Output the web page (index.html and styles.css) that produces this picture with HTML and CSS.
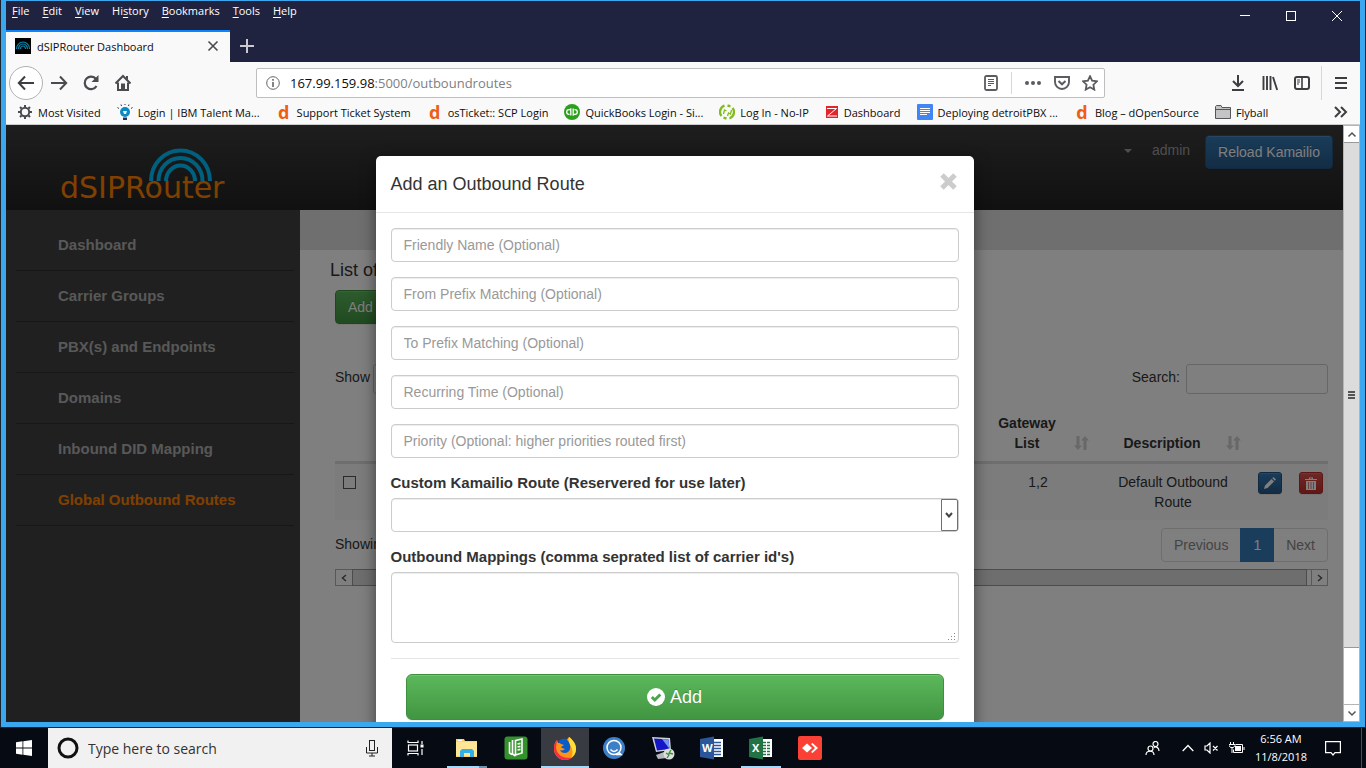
FILE: index.html
```html
<!DOCTYPE html>
<html lang="en">
<head>
<meta charset="utf-8">
<title>dSIPRouter Dashboard</title>
<link rel="stylesheet" href="styles.css">
</head>
<body>
<div class="window">
  <header class="titlebar">
    <nav class="menubar">
      <a href="#"><u>F</u>ile</a><a href="#"><u>E</u>dit</a><a href="#"><u>V</u>iew</a><a href="#">Hi<u>s</u>tory</a><a href="#"><u>B</u>ookmarks</a><a href="#"><u>T</u>ools</a><a href="#"><u>H</u>elp</a>
    </nav>
    <div class="window-controls">
      <button aria-label="Minimize"><svg width="12" height="12" viewBox="0 0 12 12"><path d="M1 5.500h10" stroke="#fff"/></svg></button>
      <button aria-label="Maximize"><svg width="12" height="12" viewBox="0 0 12 12"><rect x="1.500" y="1.500" width="9" height="9" fill="none" stroke="#fff"/></svg></button>
      <button aria-label="Close"><svg width="12" height="12" viewBox="0 0 12 12"><path d="M1 1l10 10M11 1L1 11" stroke="#fff"/></svg></button>
    </div>
    <div class="tabs">
      <div class="tab">
        <svg width="16" height="16" viewBox="0 0 16 16"><rect width="16" height="16" fill="#000"/><g fill="none" stroke="#0b86ad" stroke-width="1.200"><path d="M1.500 11a6.500 7 0 0 1 13 0"/><path d="M3.500 11a4.500 5 0 0 1 9 0"/><path d="M5.500 11a2.500 3 0 0 1 5 0"/></g></svg>
        <span class="tab-title">dSIPRouter Dashboard</span>
        <button aria-label="Close tab"><svg width="12" height="12" viewBox="0 0 12 12"><path d="M1.500 1.500l9 9M10.500 1.500l-9 9" stroke="#4a4a4f" stroke-width="1.600"/></svg></button>
      </div>
      <button class="new-tab" aria-label="New tab"><svg width="14" height="14" viewBox="0 0 14 14"><path d="M0 7h14M7 0v14" stroke="#c9c9cf" stroke-width="2"/></svg></button>
    </div>
  </header>

  <div class="toolbar">
    <div class="nav-buttons">
      <button class="back" aria-label="Back"><svg width="18" height="18" viewBox="0 0 18 18"><path d="M17 9H2M8 2.500L1.800 9 8 15.500" fill="none" stroke="#3d3d42" stroke-width="2"/></svg></button>
      <button aria-label="Forward"><svg width="18" height="18" viewBox="0 0 18 18"><path d="M1 9h15M10 2.500L16.200 9 10 15.500" fill="none" stroke="#4a4a4f" stroke-width="2"/></svg></button>
      <button aria-label="Reload"><svg width="18" height="18" viewBox="0 0 18 18"><path d="M14.500 12A6.300 6.300 0 1 1 14 5" fill="none" stroke="#4a4a4f" stroke-width="2.200"/><path d="M16.500 1v7h-7z" fill="#4a4a4f"/></svg></button>
      <button aria-label="Home"><svg width="18" height="18" viewBox="0 0 18 18"><path d="M1.500 9.500L9 2l7.500 7.500" fill="none" stroke="#4a4a4f" stroke-width="2"/><path d="M4 8.500v7.500h10V8.500" fill="none" stroke="#4a4a4f" stroke-width="2"/><path d="M7 16V9.500h4V16z" fill="#4a4a4f"/><path d="M12 2h2v4l-2-2z" fill="#4a4a4f"/></svg></button>
    </div>
    <label class="urlbar">
      <svg width="14" height="14" viewBox="0 0 14 14"><circle cx="7" cy="7" r="6.300" fill="none" stroke="#666"/><path d="M7 6v5M7 3v1.800" stroke="#666" stroke-width="1.600"/></svg>
      <span class="url" role="textbox" aria-label="Address">167.99.159.98<span class="url-path">:5000/outboundroutes</span></span>
      <svg width="16" height="16" viewBox="0 0 16 16"><rect x="2" y="1" width="12" height="14" rx="1.500" fill="none" stroke="#5b5b60" stroke-width="1.800"/><path d="M5 4.500h6M5 6.500h6M5 8.500h6M5 10.500h3" stroke="#5b5b60"/></svg>
      <i class="url-sep"></i>
      <svg width="18" height="16" viewBox="0 0 18 16"><g fill="#5b5b60"><circle cx="3" cy="8" r="2"/><circle cx="9" cy="8" r="2"/><circle cx="15" cy="8" r="2"/></g></svg>
      <svg width="16" height="16" viewBox="0 0 16 16"><path d="M1 2h14v5a7 7 0 0 1-14 0z" fill="none" stroke="#5b5b60" stroke-width="1.900"/><path d="M4.500 6L8 9.300 11.500 6" fill="none" stroke="#5b5b60" stroke-width="2"/></svg>
      <svg width="16" height="16" viewBox="0 0 16 16"><path d="M8 1.200l2.100 4.500 4.900.6-3.600 3.400.9 4.900L8 12.200l-4.300 2.400.9-4.900L1 6.300l4.900-.6z" fill="none" stroke="#5b5b60" stroke-width="1.800"/></svg>
    </label>
    <div class="tool-buttons">
      <button aria-label="Downloads"><svg width="16" height="16" viewBox="0 0 16 16"><path d="M8 0v10M3 6l5 5 5-5M2 15h12" fill="none" stroke="#3d3d42" stroke-width="2"/></svg></button>
      <button aria-label="Library"><svg width="16" height="16" viewBox="0 0 16 16"><path d="M1.500 1v14M5 1v14M8.500 1v14M11 2l4.200 13" fill="none" stroke="#3d3d42" stroke-width="1.900"/></svg></button>
      <button aria-label="Sidebars"><svg width="16" height="16" viewBox="0 0 16 16"><rect x="1" y="2" width="14" height="12" rx="2" fill="none" stroke="#3d3d42" stroke-width="2"/><path d="M8 2v12" stroke="#3d3d42" stroke-width="1.600"/><path d="M3 5h3M3 7h3M3 9h2" stroke="#3d3d42"/></svg></button>
    </div>
    <button class="app-menu" aria-label="Menu"><svg width="14" height="14" viewBox="0 0 14 14"><path d="M1 2h12M1 7h12M1 12h12" stroke="#3d3d42" stroke-width="2"/></svg></button>
  </div>

  <nav class="bookmarks">
    <a href="#"><svg width="16" height="16" viewBox="0 0 16 16"><circle cx="8" cy="8" r="4.200" fill="none" stroke="#4a4a4f" stroke-width="2"/><path d="M8 1v2M8 13v2M1 8h2M13 8h2M3 3l1.500 1.500M11.500 11.500L13 13M3 13l1.500-1.500M11.500 4.500L13 3" stroke="#4a4a4f" stroke-width="2"/></svg>Most Visited</a>
    <a href="#"><svg width="16" height="16" viewBox="0 0 16 16"><circle cx="8" cy="8" r="5" fill="#0d8ac4"/><path d="M6 7h4l-1 3H7z" fill="#e8f6fc"/><path d="M6 13.500h4V16H6z" fill="#24344f"/><path d="M4.500 2L4 .5M11.500 2l.5-1.500M2 4.500L.5 3.500M14 4.500l1.500-1M8 1V0" stroke="#24344f"/></svg>Login | IBM Talent Ma...</a>
    <a href="#"><b class="letter-d">d</b>Support Ticket System</a>
    <a href="#"><b class="letter-d">d</b>osTicket:: SCP Login</a>
    <a href="#"><svg width="16" height="16" viewBox="0 0 16 16"><circle cx="8" cy="8" r="8" fill="#2ca01c"/><g fill="none" stroke="#fff" stroke-width="1.300"><path d="M6.800 4.200v7.300M6.800 5.700H5a2.300 2.300 0 0 0 0 4.600h.6M9.200 11.800V4.500M9.200 10.300H11a2.300 2.300 0 0 0 0-4.600h-.6"/></g></svg>QuickBooks Login - Si...</a>
    <a href="#"><svg width="16" height="16" viewBox="0 0 16 16"><path d="M2.500 12a6.500 6.500 0 0 1 3-10.300M8.500 1.500l3 .8M13.500 4a6.500 6.500 0 0 1-3 10.300M7.500 14.500l-3-.8" fill="none" stroke="#82bc1f" stroke-width="2.400"/><path d="M4.500 10l1-4 2 1M8.500 12l1-3 2 1 1-4" fill="none" stroke="#82bc1f" stroke-width="1.300"/></svg>Log In - No-IP</a>
    <a href="#"><svg width="14" height="16" viewBox="0 0 14 16"><rect x="1" y="2" width="12" height="12" fill="#e2242c"/><path d="M2 4.500h9.500L2.500 12H12" fill="none" stroke="#fff"/></svg>Dashboard</a>
    <a href="#"><svg width="16" height="16" viewBox="0 0 16 16"><rect width="16" height="16" rx="1" fill="#4285f4"/><path d="M3 4.500h10M3 6.500h10M3 8.500h10M3 10.500h7" stroke="#fff"/></svg>Deploying detroitPBX ...</a>
    <a href="#"><b class="letter-d">d</b>Blog – dOpenSource</a>
    <a href="#"><svg width="16" height="16" viewBox="0 0 16 16"><path d="M.5 14.500v-12l1-1h4.500l1 2h8.500v11z" fill="#c4c4c4" stroke="#55555a"/><path d="M1 5.500h14" stroke="#55555a"/></svg>Flyball</a>
    <button class="overflow" aria-label="More bookmarks"><svg width="14" height="12" viewBox="0 0 14 12"><path d="M1 1l5 5-5 5M7 1l5 5-5 5" fill="none" stroke="#3d3d42" stroke-width="2"/></svg></button>
  </nav>

  <div class="viewport">
    <div class="page">
      <header class="site-header">
        <svg class="logo" width="172" height="56" viewBox="0 0 172 56" role="img" aria-label="dSIPRouter">
          <g fill="none" stroke="#00c0ff" stroke-width="4"><path d="M91 34a29.500 30.500 0 0 1 59 0"/><path d="M98.500 34a22 23 0 0 1 44 0"/><path d="M106 34a14.500 15.500 0 0 1 29 0"/></g>
          <text class="logo-text" x="0" y="51">dSIPRouter</text>
        </svg>
        <div class="account">
          <i class="caret"></i>
          <a href="#">admin</a>
          <button class="btn btn-primary">Reload Kamailio</button>
        </div>
      </header>
      <div class="columns">
        <nav class="sidebar">
          <a href="#">Dashboard</a>
          <a href="#">Carrier Groups</a>
          <a href="#">PBX(s) and Endpoints</a>
          <a href="#">Domains</a>
          <a href="#">Inbound DID Mapping</a>
          <a href="#" class="current">Global Outbound Routes</a>
        </nav>
        <main class="content">
          <div class="strip"></div>
          <h4 class="heading">List of Outbound Routes</h4>
          <div class="panel">
            <button class="btn btn-success">Add</button>
            <div class="filters">
              <label>Show <select class="small-control"><option>10</option></select></label>
              <label>Search: <input class="small-control search" type="search"></label>
            </div>
            <table class="routes">
              <colgroup><col class="col-check"><col><col class="col-gateway"><col class="col-desc"><col class="col-edit"><col class="col-delete"></colgroup>
              <thead><tr>
                <th></th><th></th>
                <th class="sortable">Gateway List<svg class="sort" width="15" height="14" viewBox="0 0 15 14"><path d="M2.500 0h3v9.500H8L4 14 0 9.500h2.500zM9.500 14h3V4.500H15L11 0 7 4.500h2.500z"/></svg></th>
                <th class="sortable">Description<svg class="sort" width="15" height="14" viewBox="0 0 15 14"><path d="M2.500 0h3v9.500H8L4 14 0 9.500h2.500zM9.500 14h3V4.500H15L11 0 7 4.500h2.500z"/></svg></th>
                <th></th><th></th>
              </tr></thead>
              <tbody><tr>
                <td class="check-cell"><input type="checkbox" aria-label="Select route"></td><td></td>
                <td>1,2</td><td>Default Outbound Route</td>
                <td><button class="btn btn-primary btn-xs" aria-label="Edit"><svg width="12" height="12" viewBox="0 0 12 12"><path d="M0 12l1-3.500L7.500 2 10 4.500 3.500 11zM8.300 1.200L9.500 0 12 2.500l-1.200 1.200z" fill="#fff"/></svg></button></td>
                <td class="delete-cell"><button class="btn btn-danger btn-xs" aria-label="Delete"><svg width="12" height="13" viewBox="0 0 12 13"><path d="M0 3V2h4V.5h4V2h4v1zM5 1.500V2h2v-.5zM1 4h10v9H1z" fill="#fff"/><path d="M3.500 5v7M6 5v7M8.500 5v7" stroke="#c12e2a" stroke-width=".6"/></svg></button></td>
              </tr></tbody>
            </table>
            <div class="table-foot">
              <span>Showing</span>
              <div class="pagination"><a href="#">Previous</a><a href="#" class="active">1</a><a href="#">Next</a></div>
            </div>
            <div class="hscroll">
              <i><svg width="6" height="8" viewBox="0 0 6 8"><path d="M5 1L1.500 4 5 7" fill="none" stroke="#555" stroke-width="1.500"/></svg></i><b></b>
              <i><svg width="6" height="8" viewBox="0 0 6 8"><path d="M1 1l3.500 3L1 7" fill="none" stroke="#555" stroke-width="1.500"/></svg></i>
            </div>
          </div>
        </main>
      </div>
      <div class="backdrop">
        <form class="modal" role="dialog" aria-labelledby="modal-title">
          <div class="modal-header">
            <h4 id="modal-title">Add an Outbound Route</h4>
            <button type="button" class="close" aria-label="Close"><svg width="17" height="17" viewBox="0 0 17 17"><path d="M2 2l13 13M15 2L2 15" stroke="#ccc" stroke-width="5"/></svg></button>
          </div>
          <div class="modal-body">
            <input class="field" type="text" aria-label="Friendly Name" placeholder="Friendly Name (Optional)">
            <input class="field" type="text" aria-label="From Prefix Matching" placeholder="From Prefix Matching (Optional)">
            <input class="field" type="text" aria-label="To Prefix Matching" placeholder="To Prefix Matching (Optional)">
            <input class="field" type="text" aria-label="Recurring Time" placeholder="Recurring Time (Optional)">
            <input class="field" type="text" aria-label="Priority" placeholder="Priority (Optional: higher priorities routed first)">
            <div class="group">
              <label for="route">Custom Kamailio Route (Reservered for use later)</label>
              <div class="overlay-box">
                <select class="field" id="route"><option></option></select>
                <span class="arrow"><svg width="8" height="6" viewBox="0 0 8 6"><path d="M1 1l3 3.500L7 1" fill="none" stroke="#444" stroke-width="2"/></svg></span>
              </div>
            </div>
            <div class="group">
              <label for="mappings">Outbound Mappings (comma seprated list of carrier id's)</label>
              <div class="overlay-box">
                <textarea class="field" id="mappings"></textarea>
                <svg class="grip" width="8" height="8" viewBox="0 0 8 8"><path d="M6 0h1v1H6zM3 3h1v1H3zM6 3h1v1H6zM0 6h1v1H0zM3 6h1v1H3zM6 6h1v1H6z" fill="#888"/></svg>
              </div>
            </div>
          </div>
          <div class="modal-footer">
            <button type="submit" class="btn btn-success btn-lg"><svg width="18" height="18" viewBox="0 0 18 18"><circle cx="9" cy="9" r="9" fill="#fff"/><path d="M4.800 9l3 3 5.500-5.500" fill="none" stroke="#4ba44b" stroke-width="3"/></svg>Add</button>
          </div>
        </form>
      </div>
    </div>
    <div class="vscroll">
      <i><svg width="10" height="7" viewBox="0 0 10 7"><path d="M1.500 5.500L5 2l3.500 3.500" fill="none" stroke="#555" stroke-width="1.500"/></svg></i>
      <div class="vtrack"><b><svg width="7" height="8" viewBox="0 0 7 8"><path d="M0 1h7M0 4h7M0 7h7" stroke="#555" stroke-width="2"/></svg></b></div>
      <i><svg width="10" height="7" viewBox="0 0 10 7"><path d="M1.500 1.500L5 5l3.500-3.500" fill="none" stroke="#555" stroke-width="1.500"/></svg></i>
    </div>
  </div>
</div>

<footer class="taskbar">
  <button class="start" aria-label="Start"><svg width="16" height="16" viewBox="0 0 16 16"><path d="M0 2.200L6.500 1.300v6.300H0zM7.300 1.200L16 0v7.600H7.300zM0 8.400h6.500v6.300L0 13.800zM7.300 8.400H16V16l-8.700-1.200z" fill="#fff"/></svg></button>
  <label class="search-box">
    <svg width="22" height="22" viewBox="0 0 22 22"><circle cx="11" cy="11" r="9" fill="none" stroke="#111" stroke-width="3"/></svg>
    <input type="text" aria-label="Search" placeholder="Type here to search">
    <svg width="12" height="17" viewBox="0 0 12 17"><rect x="3.500" y=".5" width="5" height="10" fill="none" stroke="#222"/><path d="M.5 7v6h11V7M6 13v3M3 16h6" fill="none" stroke="#222"/></svg>
  </label>
  <div class="apps">
    <button class="task-view" aria-label="Task View"><svg width="18" height="18" viewBox="0 0 18 18"><g fill="none" stroke="#fff" stroke-width="1.200"><path d="M1 1.500v2h10v-2M1 16.500v-2h10v2"/><rect x="1.500" y="6" width="9" height="6"/><path d="M15 2v3M15 10v6"/></g><rect x="13.500" y="5.500" width="3" height="3" fill="#fff"/></svg></button>
    <button class="running" aria-label="File Explorer"><svg width="24" height="24" viewBox="0 0 24 24"><path d="M1 3h8l1 2h12v16H1z" fill="#fbd568"/><path d="M1 6h21v14H1z" fill="#ffe596"/><path d="M5 21v-6l2-2h10l2 2v6h-4v-4H9v4z" fill="#32b1e8"/><path d="M3 4h4v1H3z" fill="#fff"/></svg></button>
    <button aria-label="Ledger"><svg width="24" height="24" viewBox="0 0 24 24"><rect x=".5" y=".5" width="23" height="23" rx="3" fill="#35912e"/><g fill="none" stroke="#fff" stroke-width="1.600"><path d="M5.500 6v11l2.500 1.500M8.500 4v14l3 2"/><path d="M11.500 4.500L18 3v14l-6.500 2zM13.500 8l3-.6M13.500 11l3-.6M13.500 14l3-.6"/></g></svg></button>
    <button class="running active" aria-label="Firefox"><svg width="24" height="24" viewBox="0 0 24 24"><path d="M16 1c2 1 3 3 4 4 2 2 3 5 3 8a11 11 0 0 1-22 0c0-4 1-7 3-9l1 3h6z" fill="#ff9414"/><path d="M1 12c0 6 4 12 11 12 3 0 5-1 7-2.500C12 23 4 20 3 12l1-8c-2 2-3 5-3 8z" fill="#f52c4f"/><path d="M16 1c2 1 3 3 4 4 2 2 3 5 3 8 0 4-2 7-5 9 3-5 1-10-1-13-1-2-2-5-1-8z" fill="#ffde38"/><path d="M5 6c2-3 5-4 8-3 2 1 3 3 4 6 1 4-1 8-5 8-3 0-4-1-5-3 2 1 4 0 5-1-2-1-4-1-4-2l3-2-3-1z" fill="#0a5cc8"/></svg></button>
    <button aria-label="Chat"><svg width="24" height="24" viewBox="0 0 24 24"><circle cx="12" cy="12" r="11" fill="#3d80c8"/><circle cx="12" cy="11.500" r="7" fill="none" stroke="#fff" stroke-width="1.500"/><path d="M8.500 13.500c2 2.500 5 2.500 7 0M14 18.500h5l-2-2" fill="none" stroke="#fff" stroke-width="1.500"/></svg></button>
    <button aria-label="Remote Desktop"><svg width="24" height="24" viewBox="0 0 24 24"><path d="M1 1l18 1 1 12-15 2z" fill="#cfd2d8"/><path d="M3 2.500l14.500 1 1 9.500L6 14.500z" fill="#1515c8"/><path d="M11 3l6.500.5 1 9.500z" fill="#7894ef"/><path d="M5 19l8-3 3 6-9 1z" fill="#b5b8bd"/><circle cx="18" cy="18" r="5.500" fill="#dedede"/><path d="M15 17l3 2-2 3M20 14l-2 3 4 1" fill="none" stroke="#389034" stroke-width="1.300"/></svg></button>
    <button aria-label="Word"><svg width="24" height="24" viewBox="0 0 24 24"><rect x="12" y="3" width="11" height="18" fill="#fff"/><path d="M14 6.500h7M14 9.500h7M14 12.500h7M14 15.500h7M14 18.500h7" stroke="#2b579a" stroke-width="1.300"/><path d="M0 3l14-2.500v23L0 21z" fill="#2b579a"/><text class="office-letter" x="2" y="16">W</text></svg></button>
    <button class="running solo" aria-label="Excel"><svg width="24" height="24" viewBox="0 0 24 24"><rect x="12" y="3" width="11" height="18" fill="#fff"/><path d="M14 6.500h7M14 9.500h7M14 12.500h7M14 15.500h7M14 18.500h7" stroke="#217346" stroke-width="1.600"/><path d="M17.500 4v16" stroke="#fff"/><path d="M0 3l14-2.500v23L0 21z" fill="#217346"/><text class="office-letter" x="3" y="16">X</text></svg></button>
    <button aria-label="AnyDesk"><svg width="24" height="24" viewBox="0 0 24 24"><rect width="24" height="24" rx="2" fill="#fb4035"/><path d="M9 7.500l5 4.500-5 4.500L4 12z" fill="#fff"/><path d="M13 8l1.500-1L20 12l-5.500 5-1.500-1 4-4z" fill="#fff"/></svg></button>
  </div>
  <div class="tray">
    <svg width="15" height="15" viewBox="0 0 15 15"><g fill="none" stroke="#fff" stroke-width="1.200"><circle cx="5.500" cy="7.500" r="2.500"/><path d="M1 14c0-5 8-5 8 0"/><circle cx="10.500" cy="3" r="2.500"/><path d="M9 6.500c2-1.500 5 0 5 3.500"/></g></svg>
    <svg class="chevron" width="12" height="8" viewBox="0 0 12 8"><path d="M.7 7L6 1.500 11.300 7" fill="none" stroke="#fff" stroke-width="1.300"/></svg>
    <svg width="15" height="12" viewBox="0 0 15 12"><path d="M1 4h2l3-3v10L3 8H1zM9 4l4.500 4.500M13.500 4L9 8.500" fill="none" stroke="#fff" stroke-width="1.200"/></svg>
    <svg width="16" height="12" viewBox="0 0 16 12"><path d="M1.500 0v2M4.500 0v2M0 2.500h6v1L4.500 5.500h-3L0 3.500zM3 5v6" fill="none" stroke="#fff"/><path d="M6.500 2.500h7v8h-9v-3M15 5v3" fill="none" stroke="#fff"/><path d="M6 4h6v5H6z" fill="#fff"/></svg>
    <div class="clock"><span>6:56 AM</span><span>11/8/2018</span></div>
    <svg class="notify" width="16" height="16" viewBox="0 0 16 16"><path d="M.6 1.600h14.800v11H10L8 15l-2-2.400H.6z" fill="none" stroke="#fff" stroke-width="1.200"/></svg>
    <i class="show-desktop"></i>
  </div>
</footer>
</body>
</html>
```

FILE: styles.css
```css
* { box-sizing: border-box; }
body {
  margin: 0;
  height: 100vh;
  display: flex;
  flex-direction: column;
  overflow: hidden;
  background: #1a2430;
  font-family: "Open Sans", "Noto Sans", sans-serif;
  font-size: 11px;
}
button { border: 0; padding: 0; background: none; font: inherit; color: inherit; }
a { color: inherit; text-decoration: none; }
svg { display: block; flex: none; }
i, b { display: block; }

/* Browser window */
.window {
  flex: 1;
  min-height: 0;
  display: flex;
  flex-direction: column;
  margin: 0 1px 1px;
  border: 5px solid #3ba7ee;
  border-top-width: 1px;
}
.titlebar {
  display: grid;
  grid-template-columns: 1fr auto;
  grid-template-rows: 29px 32px;
  background: #202340;
  color: #fff;
}
.menubar { display: flex; gap: 13px; padding: 2px 6px; line-height: 16px; }
.menubar u { text-underline-offset: 2px; }
.window-controls { display: flex; align-items: center; gap: 34px; padding-right: 17px; }
.tabs { display: flex; grid-column: 1 / 3; align-items: stretch; }
.tab {
  width: 224px;
  display: flex;
  align-items: center;
  gap: 6px;
  padding: 0 11px 2px 9px;
  background: #f9f9fa;
  border-top: 2px solid #0a84ff;
  color: #0c0c0d;
}
.tab-title { flex: 1; }
.new-tab { padding: 0 10px; }

.toolbar {
  display: flex;
  align-items: center;
  height: 41px;
  flex: none;
  background: #f9f9fa;
}
.nav-buttons { display: flex; align-items: center; gap: 14px; padding-left: 3px; width: 250px; }
.back {
  display: grid;
  place-items: center;
  width: 34px;
  height: 34px;
  margin-right: -7px;
  border: 1px solid #b1b1b3;
  border-radius: 50%;
  background: #fff;
}
.urlbar {
  flex: 1;
  display: flex;
  align-items: center;
  gap: 12px;
  height: 30px;
  padding: 0 6px 0 9px;
  border: 1px solid #bebebe;
  border-radius: 2px;
  background: #fff;
  font-size: 13px;
}
.url { flex: 1; color: #0c0c0d; margin-left: -2px; }
.url-path { color: #808080; }
.url-sep { width: 1px; height: 22px; background: #d7d7db; }
.tool-buttons { display: flex; gap: 16px; padding: 0 11px 0 125px; }
.app-menu {
  height: 34px;
  padding: 0 12px;
  border-left: 1px solid #d7d7db;
}

.bookmarks {
  display: flex;
  align-items: center;
  gap: 16px;
  height: 22px;
  flex: none;
  padding: 0 12px 3px 11px;
  background: #f9f9fa;
  border-bottom: 1px solid #ccc;
  color: #0c0c0d;
  white-space: nowrap;
}
.bookmarks a { display: flex; align-items: center; gap: 5px; }
.letter-d {
  width: 16px;
  text-align: center;
  font: bold 18px/16px "Open Sans", sans-serif;
  color: #ee5f14;
}
.overflow { margin-left: auto; }

/* Page viewport */
.viewport { flex: 1; min-height: 0; display: flex; }
.page {
  position: relative;
  flex: 1;
  min-width: 0;
  display: flex;
  flex-direction: column;
  overflow: hidden;
  background: #fff;
  color: #333;
  font: 14px/20px "Liberation Sans", Arial, sans-serif;
}
.site-header {
  display: flex;
  justify-content: space-between;
  align-items: flex-start;
  height: 85px;
  flex: none;
  padding: 10px 10px 0 54px;
  background: linear-gradient(#3c3c3c, #222);
}
.logo { margin-top: 12px; overflow: visible; }
.logo-text { font: 30px "DejaVu Sans", sans-serif; fill: #ff8000; }
.account { display: flex; gap: 15px; color: #9d9d9d; line-height: 30px; }
.caret {
  width: 8px;
  height: 4px;
  margin: 14px 5px 0 0;
  border: 4px solid transparent;
  border-top-color: #9d9d9d;
  border-bottom: 0;
}
.btn {
  display: inline-flex;
  align-items: center;
  justify-content: center;
  gap: 5px;
  padding: 6px 12px;
  border: 1px solid;
  border-radius: 4px;
  color: #fff;
  line-height: 20px;
  box-shadow: inset 0 1px 0 rgba(255, 255, 255, .15), 0 1px 1px rgba(0, 0, 0, .075);
  text-shadow: 0 -1px 0 rgba(0, 0, 0, .2);
}
.btn-primary { background: linear-gradient(#337ab7, #265a88); border-color: #245580; }
.btn-success { background: linear-gradient(#5cb85c, #419641); border-color: #3e8f3e; }
.btn-danger { background: linear-gradient(#d9534f, #c12e2a); border-color: #b92c28; }
.btn-xs { width: 24px; height: 22px; padding: 0; border-radius: 3px; }
.btn-lg { width: 100%; height: 46px; border-radius: 6px; font-size: 18px; }

.columns { flex: 1; display: flex; min-height: 0; }
.sidebar {
  width: 294px;
  flex: none;
  padding: 10px 6px 0 10px;
  background: #414141;
}
.sidebar a {
  display: block;
  padding: 15px 42px;
  border-bottom: 1px solid #2e2e2e;
  color: #b0b0b0;
  font-size: 15px;
  font-weight: bold;
}
.sidebar .current { color: #ff8000; }
.content { flex: 1; min-width: 0; }
.strip { height: 40px; background: #dedede; }
.heading { margin: 10px 30px; font-size: 18px; font-weight: normal; }
.panel { padding: 0 15px 0 35px; }
.filters {
  display: flex;
  justify-content: space-between;
  margin: 40px 0 15px;
}
.filters label { display: flex; gap: 6px; line-height: 26px; }
.small-control {
  height: 30px;
  width: 70px;
  padding: 5px;
  border: 1px solid #ccc;
  border-radius: 3px;
  background: #fff;
}
select.small-control { margin-left: -3px; }
.search { width: 142px; }
.routes { width: 100%; table-layout: fixed; border-collapse: collapse; text-align: center; }
.routes th { padding: 4px 8px 8px; vertical-align: bottom; border-bottom: 3px solid #ddd; }
.routes th.sortable { position: relative; padding-right: 30px; }
.sort { position: absolute; right: 8px; bottom: 11px; fill: #d0d0d0; }
.routes td { height: 56px; padding: 8px; vertical-align: top; background: #f9f9f9; }
.routes td .btn { vertical-align: top; }
.routes .check-cell { text-align: left; }
.routes .delete-cell { padding-right: 5px; text-align: right; }
.check-cell input {
  appearance: none;
  display: block;
  width: 13px;
  height: 13px;
  margin: 4px 0 0;
  border: 1px solid #555;
}
.col-check { width: 40px; }
.col-gateway { width: 118px; }
.col-desc { width: 152px; }
.col-edit { width: 41px; }
.col-delete { width: 38px; }
.table-foot { display: flex; justify-content: space-between; padding: 8px 0; line-height: 32px; }
.pagination { display: flex; border: 1px solid #ddd; border-radius: 4px; color: #888; line-height: 32px; }
.pagination a { padding: 0 12px; }
.pagination .active { margin: -1px 0; padding: 1px 13px; background: #337ab7; color: #fff; }
.hscroll { display: flex; height: 17px; margin-top: -1px; border: 1px solid #b0b0b0; }
.hscroll i { width: 16px; display: grid; place-items: center; }
.hscroll i:last-child { border-left: 1px solid #b0b0b0; }
.hscroll b { flex: 1; margin: -1px 4px -1px 0; background: #dcdcdc; border: 1px solid #999; }

/* Dialog */
.backdrop {
  position: absolute;
  inset: 0;
  padding-top: 31px;
  overflow: hidden;
  background: rgba(0, 0, 0, .5);
}
.modal {
  max-width: 598px;
  margin: 0 auto;
  border-radius: 5px;
  background: #fff;
  box-shadow: 0 5px 15px rgba(0, 0, 0, .5);
}
.modal-header {
  display: flex;
  justify-content: space-between;
  padding: 15px;
  height: 57px;
  border-bottom: 1px solid #e5e5e5;
}
.modal-header h4 { margin: 0; font-size: 18px; font-weight: normal; line-height: 26px; }
.close { height: 20px; padding-right: 2px; }
.modal-body { display: flex; flex-direction: column; gap: 15px; padding: 15px; }
.field {
  display: block;
  width: 100%;
  height: 34px;
  padding: 6px 12px;
  border: 1px solid #ccc;
  border-radius: 4px;
  background: #fff;
  color: #555;
  font: inherit;
  box-shadow: inset 0 1px 1px rgba(0, 0, 0, .075);
}
.field::placeholder { color: #999; opacity: 1; }
select.field { appearance: none; }
textarea.field { height: 71px; resize: none; }
.group label { display: block; margin-bottom: 5px; font-size: 15px; font-weight: bold; }
.overlay-box { position: relative; }
.arrow {
  position: absolute;
  top: 1px;
  right: 1px;
  bottom: 1px;
  width: 17px;
  display: grid;
  place-items: center;
  border: 1px solid #707070;
  border-radius: 0 2px 2px 0;
  background: #fff;
  pointer-events: none;
}
.grip { position: absolute; right: 3px; bottom: 2px; }
.modal-footer { margin: 0 15px; padding: 15px; border-top: 1px solid #e5e5e5; }

.vscroll {
  width: 17px;
  display: flex;
  flex-direction: column;
  background: #fff;
  border: 1px solid #b4b4b4;
}
.vscroll i { display: grid; place-items: center; height: 16px; }
.vtrack { flex: 1; display: flex; flex-direction: column; border-bottom: 1px solid #b4b4b4; }
.vtrack b {
  height: 90%;
  display: grid;
  place-items: center;
  background: #dcdcdc;
  border: solid #999;
  border-width: 1px 0;
}

/* Taskbar */
.taskbar {
  display: flex;
  height: 40px;
  flex: none;
  background: #060a12;
  color: #fff;
}
.start { width: 48px; display: grid; place-items: center; }
.search-box {
  width: 344px;
  display: flex;
  align-items: center;
  gap: 9px;
  padding: 0 14px 0 9px;
  background: #f1f1f1;
}
.search-box input { flex: 1; min-width: 0; padding: 0; border: 0; background: none; font: 14px "Open Sans", sans-serif; }
.search-box input::placeholder { color: #333; opacity: 1; }
.apps { display: flex; gap: 1px; }
.apps button { width: 48px; display: grid; place-items: center; }
.apps .task-view { margin-right: 2px; }
.apps .running {
  background: linear-gradient(90deg, #a8d8f8 0 32px, #6d93ac 32px 40px) no-repeat 4px 38px / 40px 2px;
}
.apps .solo { background: linear-gradient(#a8d8f8, #a8d8f8) no-repeat 4px 38px / 40px 2px; }
.apps .active { background: linear-gradient(#a8d8f8, #a8d8f8) no-repeat 0 38px / 100% 2px, #383c42; }
.office-letter { font: bold 11px "Open Sans", sans-serif; fill: #fff; }
.tray { display: flex; align-items: center; margin-left: auto; gap: 10px; padding-right: 4px; }
.chevron { margin-left: 12px; }
.clock { display: flex; flex-direction: column; align-items: center; line-height: 18px; }
.notify { margin-left: 8px; }
.show-desktop { width: 1px; height: 40px; margin-left: 10px; background: #4a4e55; }
```
